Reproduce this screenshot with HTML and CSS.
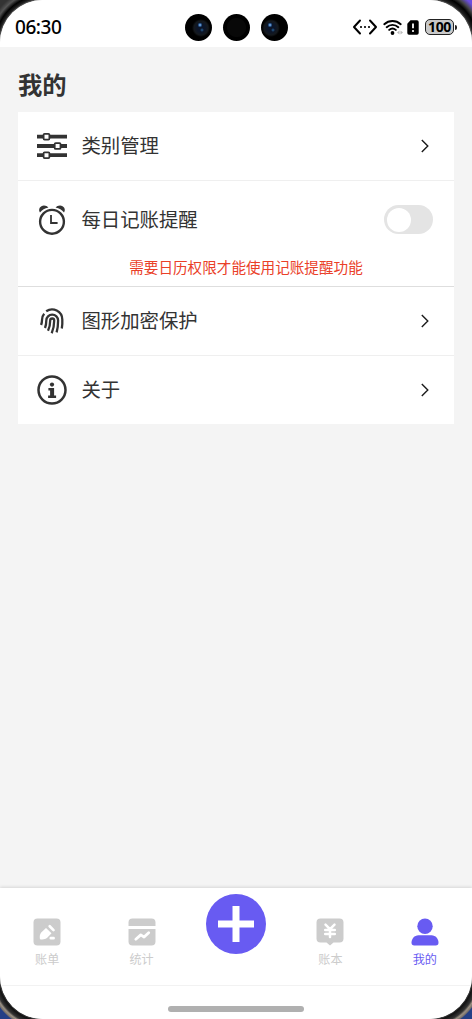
FILE: index.html
```html
<!DOCTYPE html>
<html lang="zh-CN">
<head>
<meta charset="utf-8">
<title>我的</title>
<link rel="stylesheet" href="styles.css">
</head>
<body>
<div class="device">
  <div class="screen">
    <header class="status">
      <span class="time">06:30</span>
      <div class="cameras">
        <i class="lens lit"></i><i class="lens"></i><i class="lens lit left"></i>
      </div>
      <div class="indicators">
        <svg width="26" height="18" viewBox="0 0 26 18"><path d="M8 2.5 2 9l6 6.5M18 2.5 24 9l-6 6.5" fill="none" stroke="#000" stroke-width="2" stroke-linecap="round" stroke-linejoin="round"/><circle cx="9" cy="9" r="1.1"/><circle cx="13" cy="9" r="1.1"/><circle cx="17" cy="9" r="1.1"/></svg>
        <svg width="20" height="18" viewBox="0 0 20 18"><g fill="none" stroke="#000" stroke-width="1.9" stroke-linecap="round"><path d="M1.3 6.2a12.2 12.2 0 0 1 16.4 0M3.7 9.2a8.5 8.5 0 0 1 11.6 0M6.2 11.9a5 5 0 0 1 6.6 0"/></g><circle cx="9.5" cy="15" r="1.9"/><path d="M16.5 12.5 14 14.5l2.5 2zM17.5 12.5l2.5 2-2.5 2z" fill="#bbb"/></svg>
        <svg class="sim" width="12" height="15" viewBox="0 0 12 15"><path d="M3.5.3H10A1.7 1.7 0 0 1 11.7 2v11a1.7 1.7 0 0 1-1.7 1.7H2A1.7 1.7 0 0 1 .3 13V3.7z"/><path d="M6 3.5v4.8" stroke="#fff" stroke-width="1.8"/><circle cx="6" cy="11" r="1.1" fill="#fff"/></svg>
        <span class="battery">100</span><i class="nub"></i>
      </div>
    </header>
    <main class="content">
      <h1>我的</h1>
      <section class="card">
        <div class="row">
          <svg class="icon" viewBox="0 0 32 32"><path d="M1 6.7h30M1 16h30M1 25.2h30" stroke="#333" stroke-width="3.8"/><g fill="#fff" stroke="#333" stroke-width="1.8"><rect x="7.6" y="3.8" width="5.8" height="5.8" rx="1"/><rect x="18.7" y="13.1" width="5.8" height="5.8" rx="1"/><rect x="7.6" y="22.3" width="5.8" height="5.8" rx="1"/></g></svg>
          <span class="label">类别管理</span>
          <svg class="chevron" viewBox="0 0 10 14"><path d="m1.8 1 6 6-6 6"/></svg>
        </div>
        <div class="row reminder">
          <div class="line">
            <svg class="icon" viewBox="0 0 32 32"><circle cx="16" cy="17.8" r="11.9" fill="none" stroke="#333" stroke-width="2.4"/><path d="M15 11v8h6.6" fill="none" stroke="#333" stroke-width="1.8"/><path d="M4 8.6C1.8 5.4 4.2 1.5 8 1.5c1.8 0 3.5.8 4.4 2.1C8.8 4.3 6 6 4 8.6zM28 8.6c2.2-3.2-.2-7.1-4-7.1-1.8 0-3.5.8-4.4 2.1C23.2 4.3 26 6 28 8.6z" fill="#333"/></svg>
            <span class="label">每日记账提醒</span>
            <span class="switch"><i></i></span>
          </div>
          <p class="hint">需要日历权限才能使用记账提醒功能</p>
        </div>
        <div class="row">
          <svg class="icon" viewBox="0 0 32 32"><path d="M10.2 6.3A10.2 10.2 0 0 1 26.3 14.5c.2 3.3 0 6-.5 9M8.2 8.8C6.3 10.9 6 12.8 6 15c0 1.8-.3 3.4-.9 5M9 23c1-2.5 1.3-5 1.3-7.5a5.9 5.9 0 0 1 11.8 0c0 4.2-.4 8-1.5 11.9M12 25.7c1.6-3.2 2.2-6.6 2.2-10.2a2 2 0 0 1 4 0c0 5-.9 9-2.5 12.7" fill="none" stroke="#333" stroke-width="2.3"/></svg>
          <span class="label">图形加密保护</span>
          <svg class="chevron" viewBox="0 0 10 14"><path d="m1.8 1 6 6-6 6"/></svg>
        </div>
        <div class="row">
          <svg class="icon" viewBox="0 0 32 32"><circle cx="16" cy="16" r="13.5" fill="none" stroke="#333" stroke-width="2.5"/><circle cx="16" cy="10.6" r="2.1" fill="#333"/><path d="M12.4 14h5.7v7.6h2V24h-8v-2.4h2v-5.2h-1.7z" fill="#333"/></svg>
          <span class="label">关于</span>
          <svg class="chevron" viewBox="0 0 10 14"><path d="m1.8 1 6 6-6 6"/></svg>
        </div>
      </section>
    </main>
    <nav class="tabs">
      <a class="tab"><svg viewBox="0 0 28 28"><rect x=".5" y=".5" width="27" height="27" rx="4" fill="#ccc"/><path d="M7 21.2c-.6-2.3-.2-5 1.2-6.6L13 10l5.5 5.3-4.3 4.4c-1.7 1.6-4.4 2-7.2 1.5z" fill="#fff"/><path d="m16.7 8.3 3.8 3.8M17.8 20.2h2.8" stroke="#fff" stroke-width="2.7" stroke-linecap="round"/></svg><span>账单</span></a>
      <a class="tab"><svg viewBox="0 0 28 28"><path d="M.5 8V4.5a4 4 0 0 1 4-4h19a4 4 0 0 1 4 4V8zM.5 11h27v12.5a4 4 0 0 1-4 4h-19a4 4 0 0 1-4-4z" fill="#ccc"/><path d="m7.8 21.2 5-4.3 3.3 2.2 4.6-4.3" fill="none" stroke="#fff" stroke-width="2.8" stroke-linecap="round" stroke-linejoin="round"/></svg><span>统计</span></a>
      <a class="add"><svg viewBox="0 0 60 60"><circle cx="30" cy="30" r="30" fill="#685bf2"/><path d="M30 12v36M12 30h36" stroke="#fff" stroke-width="7"/></svg></a>
      <a class="tab"><svg viewBox="0 0 28 28"><path d="M4.5.5h19a4 4 0 0 1 4 4v16a4 4 0 0 1-4 4h-6l-3.5 3-3.5-3h-6a4 4 0 0 1-4-4v-16a4 4 0 0 1 4-4z" fill="#ccc"/><path d="m9.5 6.7 4.5 4.5 4.5-4.5M14 11.2v7.9M9.2 12h9.6M9.2 16h9.6" fill="none" stroke="#fff" stroke-width="2.5" stroke-linecap="round"/></svg><span>账本</span></a>
      <a class="tab active"><svg viewBox="0 0 28 28"><circle cx="14" cy="8.2" r="7.7"/><path d="M7.5 17.3h13c4.2 0 7 3.7 7 7.5 0 1.7-1 2.7-2.7 2.7H3.2c-1.7 0-2.7-1-2.7-2.7 0-3.8 2.8-7.5 7-7.5z"/></svg><span>我的</span></a>
    </nav>
    <footer class="home"><i></i></footer>
  </div>
</div>
</body>
</html>
```

FILE: styles.css
```css
* { box-sizing: border-box; margin: 0; padding: 0; }
body { font-family: "Noto Sans CJK SC", sans-serif; color: #333; }
svg, i { display: block; }

.device {
  width: 472px;
  height: 1019px;
  overflow: hidden;
  background:
    radial-gradient(circle at 44px 44px, #999 43px, #222 46px, #000 49px, #555 53px, #333 57px) 0 0 / 44px 44px no-repeat,
    radial-gradient(circle at 0 44px, #999 43px, #222 46px, #000 50px, #444 54px, #6b4de0 59px) 100% 0 / 44px 44px no-repeat,
    radial-gradient(circle at 44px 0, #777 43px, #111 46px, #333 50px, #9b9184 52px, #77706a 54px, #243f86 55px) 0 100% / 44px 44px no-repeat,
    radial-gradient(circle at 0 0, #777 43px, #111 46px, #333 50px, #9b9184 52px, #77706a 54px, #243f86 55px) 100% 100% / 44px 44px no-repeat;
}
.screen {
  display: flex;
  flex-direction: column;
  height: 100%;
  overflow: hidden;
  border-radius: 43px;
  background: #f4f4f4;
}

.status {
  display: grid;
  grid-template-columns: 1fr 103px 1fr;
  align-items: center;
  height: 47px;
  padding: 7px 15px 0 16px;
  background: #fff;
}
.time {
  margin-left: -1px;
  font: 500 19px/20px "Noto Sans", sans-serif;
  letter-spacing: -.45px;
  color: #000;
}
.cameras { display: flex; justify-content: space-between; }
.lens { width: 27px; height: 27px; border-radius: 50%; background: radial-gradient(circle, #080808 9px, #000 10px); }
.lit { background: radial-gradient(circle at 15px 11px, #9cc8ff 0, #255389 1.5px, transparent 2.5px), radial-gradient(circle at 17px 16px, #276094 0, transparent 2px), radial-gradient(circle at 16px 14px, #0c1528 4px, #15191d 7px, #000 9px); }
.lit.left { background: radial-gradient(circle at 9px 11px, #9cc8ff 0, #255389 1.5px, transparent 2.5px), radial-gradient(circle at 12px 16px, #276094 0, transparent 2px), radial-gradient(circle at 10px 14px, #0c1528 4px, #15191d 7px, #000 9px); }
.indicators { display: flex; align-items: center; justify-content: flex-end; }
.indicators svg:nth-child(2) { margin-left: 5px; }
.sim { margin: 0 5px 0 4px; }
.battery {
  width: 29px;
  height: 16px;
  margin-left: 1px;
  border: 1.5px solid #222;
  border-radius: 5px;
  background: #c9c9c9;
  color: #000;
  font: 700 14px/13px "Noto Sans", sans-serif;
  letter-spacing: -.3px;
  text-align: center;
}
.nub { width: 2px; height: 5px; margin-left: 1px; border-radius: 0 2px 2px 0; background: #222; }

.content { flex: 1; padding: 19px 18px 0; }
h1 { height: 46px; font-size: 24.3px; line-height: 36px; font-weight: 700; }
.card { background: #fff; }
.row { display: flex; align-items: center; height: 68.5px; padding: 0 24px 0 18px; border-bottom: 1px solid #efefef; }
.row:last-child { border: 0; height: 68px; }
.reminder { display: block; height: 106.5px; padding-right: 21px; border-color: #dedede; }
.line { display: flex; align-items: center; height: 78px; }
.icon { width: 32px; height: 32px; margin-right: 13.4px; }
.label { flex: 1; padding-bottom: 2px; font-size: 19.4px; line-height: 28px; }
.chevron { width: 10px; height: 14px; fill: none; stroke: #1c1c1c; stroke-width: 1.4; }
.switch { width: 49px; height: 29px; padding: 2.5px 3px; border-radius: 15px; background: #e4e4e4; }
.switch i { width: 24px; height: 24px; border-radius: 50%; background: #fff; }
.hint { margin: -1px -17px 0 0; padding-left: 6px; font-size: 14.6px; line-height: 18px; color: #ea4028; text-align: center; white-space: nowrap; }

.tabs {
  display: grid;
  grid-template-columns: repeat(5, 1fr);
  height: 98.5px;
  background: #fff;
  border-bottom: 1px solid #f2f2f2;
  box-shadow: 0 -1px 3px rgba(0, 0, 0, .12);
}
.tab { display: flex; flex-direction: column; align-items: center; padding-top: 30px; color: #ccc; font-size: 12.1px; line-height: 18px; }
.tab svg { width: 28px; height: 28px; margin-bottom: 4px; }
.active { color: #685bf2; fill: #685bf2; }
.add { padding-top: 6.5px; }
.add svg { width: 60px; height: 60px; margin: 0 auto; }
.home { display: flex; justify-content: center; height: 33px; padding-top: 19.5px; background: #fff; }
.home i { width: 136px; height: 6px; border-radius: 3px; background: #b0b0b0; }
```
